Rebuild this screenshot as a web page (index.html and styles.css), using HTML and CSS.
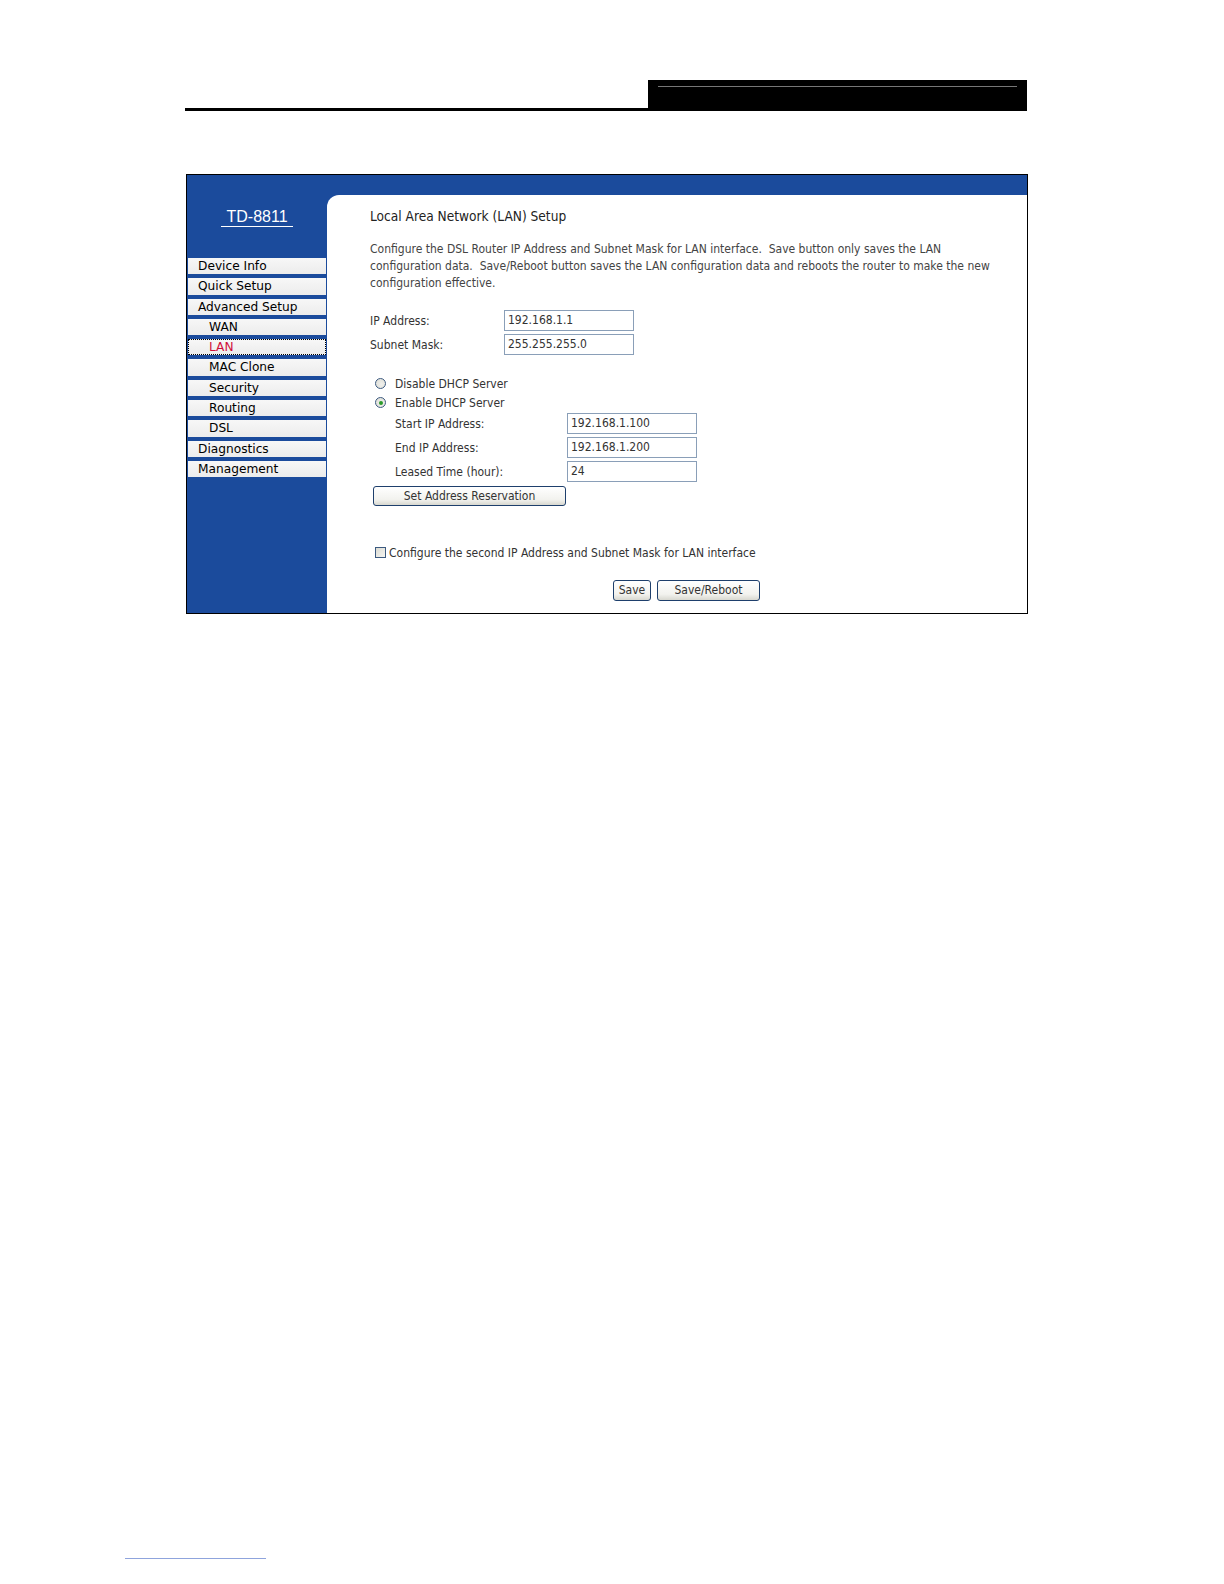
FILE: index.html
```html
<!DOCTYPE html>
<html>
<head>
<meta charset="utf-8">
<link rel="stylesheet" href="styles.css">
</head>
<body>
<div class="page">
  <header class="doc-head">
    <div class="head-rule"></div>
    <div class="head-box"><div class="head-line"></div></div>
  </header>

  <div class="frame">
    <aside class="sidebar">
      <div class="brand"><span class="brand-text">TD-8811</span></div>
      <nav class="menu">
        <div class="item">Device Info</div>
        <div class="item">Quick Setup</div>
        <div class="item">Advanced Setup</div>
        <div class="item sub">WAN</div>
        <div class="item sub active">LAN</div>
        <div class="item sub">MAC Clone</div>
        <div class="item sub">Security</div>
        <div class="item sub">Routing</div>
        <div class="item sub">DSL</div>
        <div class="item">Diagnostics</div>
        <div class="item">Management</div>
      </nav>
    </aside>

    <main class="content">
      <h1 class="title">Local Area Network (LAN) Setup</h1>
      <p class="desc">Configure the DSL Router IP Address and Subnet Mask for LAN interface.&nbsp; Save button only saves the LAN<br>configuration data.&nbsp; Save/Reboot button saves the LAN configuration data and reboots the router to make the new<br>configuration effective.</p>

      <div class="field">
        <span class="label">IP Address:</span>
        <span class="input">192.168.1.1</span>
      </div>
      <div class="field">
        <span class="label">Subnet Mask:</span>
        <span class="input">255.255.255.0</span>
      </div>

      <div class="radios">
        <div class="radio-row"><span class="radio"></span><span>Disable DHCP Server</span></div>
        <div class="radio-row"><span class="radio checked"></span><span>Enable DHCP Server</span></div>
      </div>

      <div class="dhcp">
        <div class="field">
          <span class="label wide">Start IP Address:</span>
          <span class="input">192.168.1.100</span>
        </div>
        <div class="field">
          <span class="label wide">End IP Address:</span>
          <span class="input">192.168.1.200</span>
        </div>
        <div class="field">
          <span class="label wide">Leased Time (hour):</span>
          <span class="input">24</span>
        </div>
      </div>

      <div class="btn reserve">Set Address Reservation</div>

      <div class="check-row"><span class="checkbox"></span><span>Configure the second IP Address and Subnet Mask for LAN interface</span></div>

      <div class="actions">
        <div class="btn save">Save</div>
        <div class="btn reboot">Save/Reboot</div>
      </div>
    </main>
  </div>

  <div class="foot-line"></div>
</div>
</body>
</html>
```

FILE: styles.css
```css
html, body {
  margin: 0;
  padding: 0;
  background: #ffffff;
}
.page {
  width: 1224px;
  height: 1584px;
  overflow: hidden;
  font-family: "DejaVu Sans Condensed", "DejaVu Sans", sans-serif;
}

/* document header */
.doc-head {
  display: flex;
  align-items: flex-end;
  margin: 80px 0 0 185px;
}
.head-rule {
  width: 463px;
  height: 3px;
  background: #000;
}
.head-box {
  width: 379px;
  height: 31px;
  background: #000;
  padding-top: 6px;
  box-sizing: border-box;
}
.head-line {
  height: 1px;
  background: #777;
  margin: 0 10px 0 10px;
}

/* screenshot frame */
.frame {
  margin: 63px 0 0 186px;
  width: 842px;
  height: 440px;
  box-sizing: border-box;
  border: 1px solid #000;
  background: #1b4b9c;
  display: flex;
}
.sidebar {
  width: 140px;
  flex: none;
}
.brand {
  padding-top: 32px;
  height: 51px;
  text-align: center;
}
.brand-text {
  display: inline-block;
  width: 72px;
  color: #fff;
  font-family: "Liberation Sans", Arial, sans-serif;
  font-size: 16px;
  line-height: 18px;
  border-bottom: 1px solid #fff;
}
.menu {
  display: flex;
  flex-direction: column;
  gap: 4px;
}
.item {
  height: 16.3px;
  margin: 0 1px;
  background: linear-gradient(#f7f7f7, #ececec);
  font-family: "DejaVu Sans", Verdana, sans-serif;
  font-size: 12.2px;
  line-height: 16px;
  color: #000;
  padding-left: 10px;
  box-sizing: border-box;
}
.item.sub {
  padding-left: 21px;
}
.item.active {
  color: #d0103a;
  border: 1px dotted #000;
  line-height: 14px;
  padding-left: 20px;
}

/* content */
.content {
  flex: 1;
  margin-top: 20px;
  background: #fff;
  border-top-left-radius: 12px;
  padding: 13px 0 0 43px;
  color: #333;
  font-size: 12px;
}
.title {
  margin: 0;
  font-size: 13.6px;
  font-weight: normal;
  line-height: 17px;
  color: #222;
}
.desc {
  margin: 16px 0 0 0;
  line-height: 17px;
  font-size: 12px;
  color: #444;
}
.field {
  display: flex;
  align-items: center;
  height: 21px;
  margin-bottom: 3px;
}
.content > .field:first-of-type {
  margin-top: 18px;
}
.label {
  width: 134px;
  flex: none;
}
.label.wide {
  width: 172px;
}
.input {
  width: 130px;
  height: 21px;
  box-sizing: border-box;
  border: 1px solid #8a9fb8;
  padding-left: 3px;
  line-height: 19px;
  color: #333;
}
.radios {
  margin: 19px 0 0 5px;
}
.radio-row {
  display: flex;
  align-items: center;
  height: 19px;
}
.radio {
  width: 11px;
  height: 11px;
  box-sizing: border-box;
  border: 1px solid #3c5a80;
  border-radius: 50%;
  background: radial-gradient(circle at 60% 60%, #f0f0ec, #dcdcd4);
  margin-right: 9px;
  position: relative;
}
.radio.checked::after {
  content: "";
  position: absolute;
  left: 2.5px;
  top: 2.5px;
  width: 4px;
  height: 4px;
  border-radius: 50%;
  background: #2a9a2a;
}
.dhcp {
  margin: 1px 0 0 25px;
}
.btn {
  box-sizing: border-box;
  border: 1px solid #1e3f6c;
  border-radius: 3px;
  background: linear-gradient(#ffffff, #f2f2ee 70%, #d8d8d0);
  text-align: center;
  color: #333;
  font-size: 12px;
}
.reserve {
  width: 193px;
  height: 20px;
  line-height: 18px;
  margin: 4px 0 0 3px;
}
.check-row {
  display: flex;
  align-items: center;
  margin: 40px 0 0 5px;
  height: 13px;
}
.checkbox {
  width: 11px;
  height: 11px;
  box-sizing: border-box;
  border: 1px solid #3c5a80;
  background: linear-gradient(135deg, #dcdcd4, #f4f4f0);
  margin-right: 3px;
}
.actions {
  display: flex;
  gap: 6px;
  margin: 21px 0 0 243px;
}
.save {
  width: 38px;
  height: 21px;
  line-height: 19px;
}
.reboot {
  width: 103px;
  height: 21px;
  line-height: 19px;
}

.foot-line {
  width: 141px;
  height: 1px;
  background: #8fa4dd;
  margin: 944px 0 0 125px;
}
```
